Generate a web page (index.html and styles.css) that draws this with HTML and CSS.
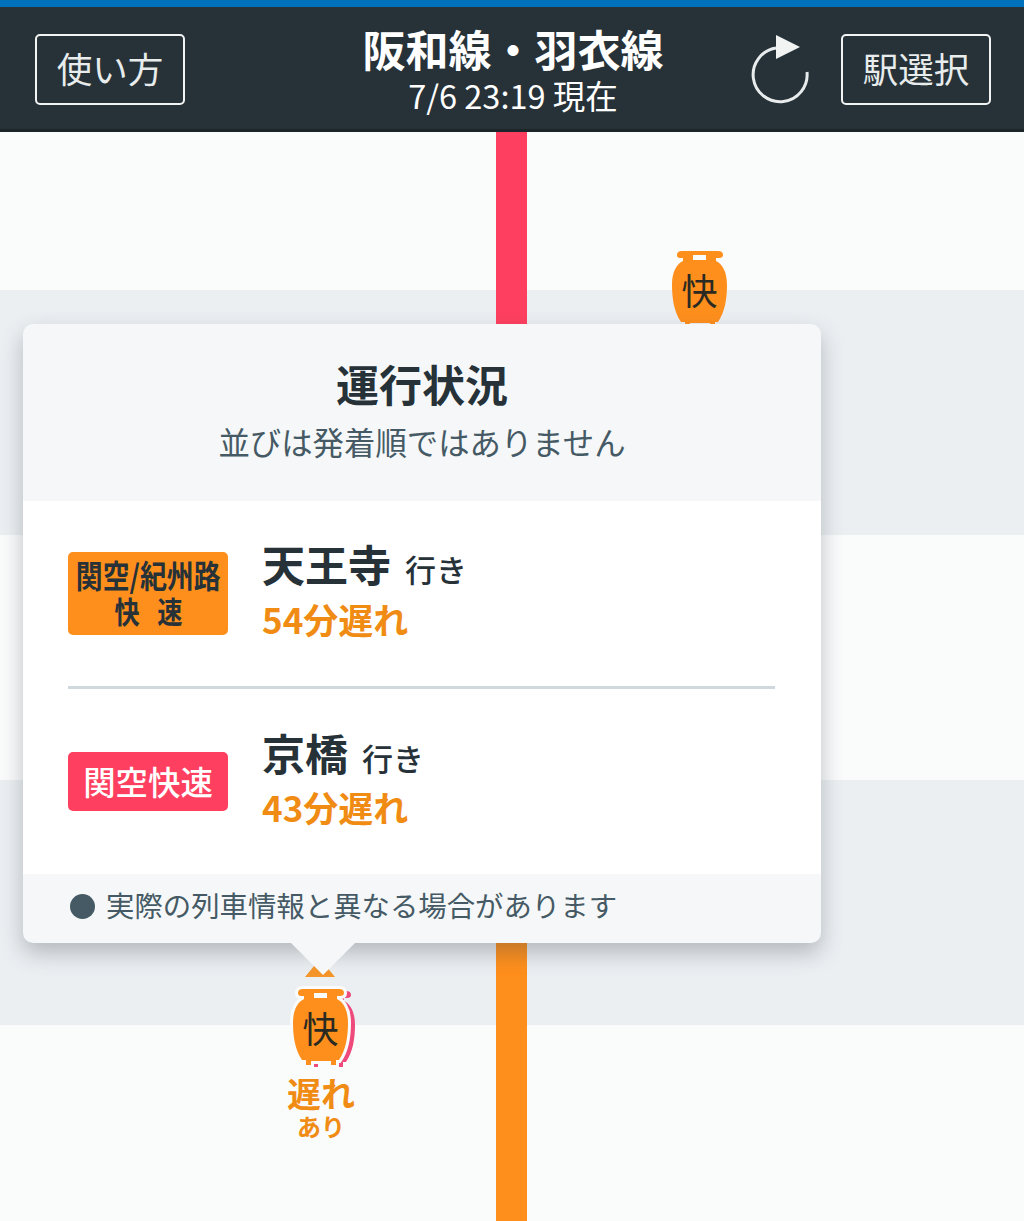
FILE: index.html
```html
<!DOCTYPE html>
<html lang="ja">
<head>
<meta charset="utf-8">
<title>運行状況</title>
<link rel="stylesheet" href="styles.css">
</head>
<body>

<header class="header">
  <a class="header-btn header-btn-left">使い方</a>
  <div class="header-title">
    <h1>阪和線・羽衣線</h1>
    <p>7/6 23:19 現在</p>
  </div>
  <div class="header-right">
    <svg class="reload" width="60" height="70" viewBox="0 0 60 70">
      <path d="M26 14A27 27 0 1 0 57 38" fill="none" stroke="#e8ecec" stroke-width="3"/>
      <path d="M26 1L50 13L26 25Z" fill="#f2f4f4"/>
    </svg>
    <a class="header-btn">駅選択</a>
  </div>
</header>

<main class="track">
  <div class="band band-first"></div>
  <div class="band band-grey"></div>
  <div class="band"></div>
  <div class="band band-grey"></div>
  <div class="band band-last"></div>

  <div class="line line-red"></div>
  <div class="line line-orange"></div>

  <div class="train train-top">
    <svg width="56" height="77" viewBox="0 0 56 77">
      <g class="lantern-orange">
        <path id="lantern" d="M5 5Q5 1 10 1H46Q51 1 51 5Q51 8 47 8H44V11C50 14 55 21 55 35C55 48 53 62 46 72H43V77H38V73H18V77H13V72H9C2 62 0 48 0 35C0 21 5 14 11 11V8H8Q5 8 5 5ZM21 5H34V10H21Z"/>
      </g>
    </svg>
    <span class="train-kana">快</span>
  </div>

  <div class="marker"></div>

  <div class="train train-bottom">
    <svg width="56" height="77" viewBox="0 0 56 77">
      <use href="#lantern" class="lantern-pink" transform="translate(7 2)"/>
      <use href="#lantern" class="lantern-orange lantern-outlined"/>
    </svg>
    <span class="train-kana">快</span>
    <div class="train-late">遅れ</div>
    <div class="train-late-sub">あり</div>
  </div>

  <section class="popup">
    <div class="popup-head">
      <h2>運行状況</h2>
      <p>並びは発着順ではありません</p>
    </div>
    <div class="popup-body">
      <div class="row row-first">
        <div class="badge badge-orange">
          <span class="badge-line">関空/紀州路</span>
          <span class="badge-line badge-line-wide">快 速</span>
        </div>
        <div class="row-info">
          <div class="dest">天王寺<span class="dest-suffix">行き</span></div>
          <div class="delay">54分遅れ</div>
        </div>
      </div>
      <div class="row row-second">
        <div class="badge badge-red">関空快速</div>
        <div class="row-info">
          <div class="dest dest-low">京橋<span class="dest-suffix">行き</span></div>
          <div class="delay">43分遅れ</div>
        </div>
      </div>
    </div>
    <div class="popup-foot">
      <span class="dot"></span>
      <span class="foot-text">実際の列車情報と異なる場合があります</span>
    </div>
    <div class="popup-arrow"></div>
  </section>
</main>

</body>
</html>
```

FILE: styles.css
```css
body {
  margin: 0;
  width: 1024px;
  height: 1221px;
  overflow: hidden;
  font-family: "Noto Sans CJK JP", "Noto Sans", sans-serif;
  color: #263238;
  background-color: #fafbfb;
}

h1, h2, p {
  margin: 0;
}

.header {
  height: 122px;
  background-color: #263238;
  border-top: 7px solid #0072bd;
  border-bottom: 3px solid #1c2529;
  display: grid;
  grid-template-columns: 1fr auto 1fr;
  align-items: center;
  padding: 0 33px 0 35px;
  color: #fff;
}

.header-btn {
  width: 150px;
  height: 71px;
  box-sizing: border-box;
  border: 2px solid #f2f4f4;
  border-radius: 5px;
  display: flex;
  align-items: center;
  justify-content: center;
  padding-bottom: 4px;
  font-size: 35.5px;
  color: #e8ecec;
  margin-top: 3px;
}

.header-title {
  text-align: center;
  margin-top: -2px;
}

.header-title h1 {
  font-size: 43px;
  line-height: 56px;
  font-weight: 700;
}

.header-title p {
  font-size: 32.5px;
  line-height: 38px;
}

.header-right {
  display: flex;
  align-items: center;
  justify-content: flex-end;
  gap: 31px;
}

.reload {
  margin-top: 2px;
}

.track {
  position: relative;
  height: 1089px;
  overflow: hidden;
}

.band {
  height: 245px;
  background-color: #fafbfb;
}

.band-first {
  height: 158px;
}

.band-last {
  height: 196px;
}

.band-grey {
  background-color: #eceff2;
}

.line {
  position: absolute;
  left: 496px;
  width: 31px;
}

.line-red {
  top: 0;
  height: 400px;
  background-color: #ff3f5f;
}

.line-orange {
  top: 400px;
  bottom: 0;
  background-color: #ff8f1c;
}

.train {
  position: absolute;
  width: 56px;
}

.train svg {
  display: block;
  overflow: visible;
}

.train-top {
  left: 672px;
  top: 118px;
}

.train-bottom {
  left: 293px;
  top: 856px;
}

.train-kana {
  position: absolute;
  left: 0;
  top: 16px;
  width: 55px;
  text-align: center;
  font-size: 36px;
  line-height: 46px;
  color: #2a2a22;
}

.lantern-orange {
  fill: #ff8f1c;
  fill-rule: evenodd;
}

.lantern-outlined {
  stroke: #fafbfb;
  stroke-width: 6px;
  paint-order: stroke;
}

.lantern-pink {
  fill: #ee4a7c;
  fill-rule: evenodd;
}

.train-late,
.train-late-sub {
  width: 56px;
  white-space: nowrap;
  display: flex;
  justify-content: center;
  font-weight: 700;
  color: #f08c14;
}

.train-late {
  font-size: 34px;
  line-height: 42px;
  margin-top: 7px;
}

.train-late-sub {
  font-size: 24px;
  line-height: 26px;
  margin-top: -1px;
}

.marker {
  position: absolute;
  left: 305px;
  top: 834px;
  width: 30px;
  height: 11px;
  background-color: #f5962a;
  clip-path: polygon(30% 0, 70% 0, 100% 100%, 0 100%);
}

.popup {
  position: absolute;
  left: 23px;
  top: 192px;
  width: 798px;
  height: 619px;
  display: flex;
  flex-direction: column;
  border-radius: 10px;
  background-color: #f5f7f9;
  box-shadow: 0 10px 22px rgba(60, 70, 80, 0.32);
}

.popup-head {
  height: 177px;
  box-sizing: border-box;
  padding-top: 29px;
  text-align: center;
}

.popup-head h2 {
  font-size: 43px;
  line-height: 60px;
  font-weight: 700;
}

.popup-head p {
  font-size: 31.4px;
  line-height: 50px;
  margin-top: 4px;
  color: #455a64;
}

.popup-body {
  height: 373px;
  padding: 0 46px 0 45px;
  background-color: #fff;
}

.row {
  display: flex;
  align-items: center;
  gap: 34px;
}

.row-first {
  height: 185px;
  border-bottom: 3px solid #cfd8dc;
}

.row-second {
  height: 185px;
}

.row-info {
  margin-top: -6px;
}

.badge {
  width: 160px;
  box-sizing: border-box;
  border-radius: 5px;
  flex-shrink: 0;
  display: flex;
  flex-direction: column;
  align-items: center;
  justify-content: center;
  white-space: nowrap;
}

.badge-orange {
  height: 83px;
  padding-bottom: 3px;
  background-color: #ff8f1c;
  font-size: 32px;
  line-height: 36px;
  font-weight: 700;
}

.badge-line {
  display: block;
  transform: scaleX(0.84);
}

.badge-line-wide {
  font-size: 30px;
  word-spacing: 14px;
}

.badge-red {
  height: 59px;
  padding-bottom: 2px;
  background-color: #ff3f5f;
  color: #fff;
  font-size: 32.4px;
  font-weight: 500;
}

.dest {
  font-size: 43px;
  line-height: 52px;
  font-weight: 700;
}

.dest-low {
  padding-top: 2px;
  line-height: 50px;
}

.dest-suffix {
  font-size: 31px;
  font-weight: 500;
  margin-left: 14px;
}

.delay {
  font-size: 35px;
  line-height: 50px;
  font-weight: 700;
  margin-top: -1px;
  color: #f08c14;
}

.popup-foot {
  flex: 1;
  display: flex;
  align-items: center;
  gap: 11px;
  padding-left: 47px;
  padding-bottom: 4px;
  font-size: 28.4px;
  color: #455a64;
}

.foot-text {
  margin-bottom: 4px;
}

.dot {
  width: 25px;
  height: 25px;
  border-radius: 50%;
  background-color: #455a64;
}

.popup-arrow {
  position: absolute;
  left: 268px;
  bottom: -32px;
  width: 0;
  height: 0;
  border-left: 32px solid transparent;
  border-right: 32px solid transparent;
  border-top: 32px solid #f5f7f9;
}
```
